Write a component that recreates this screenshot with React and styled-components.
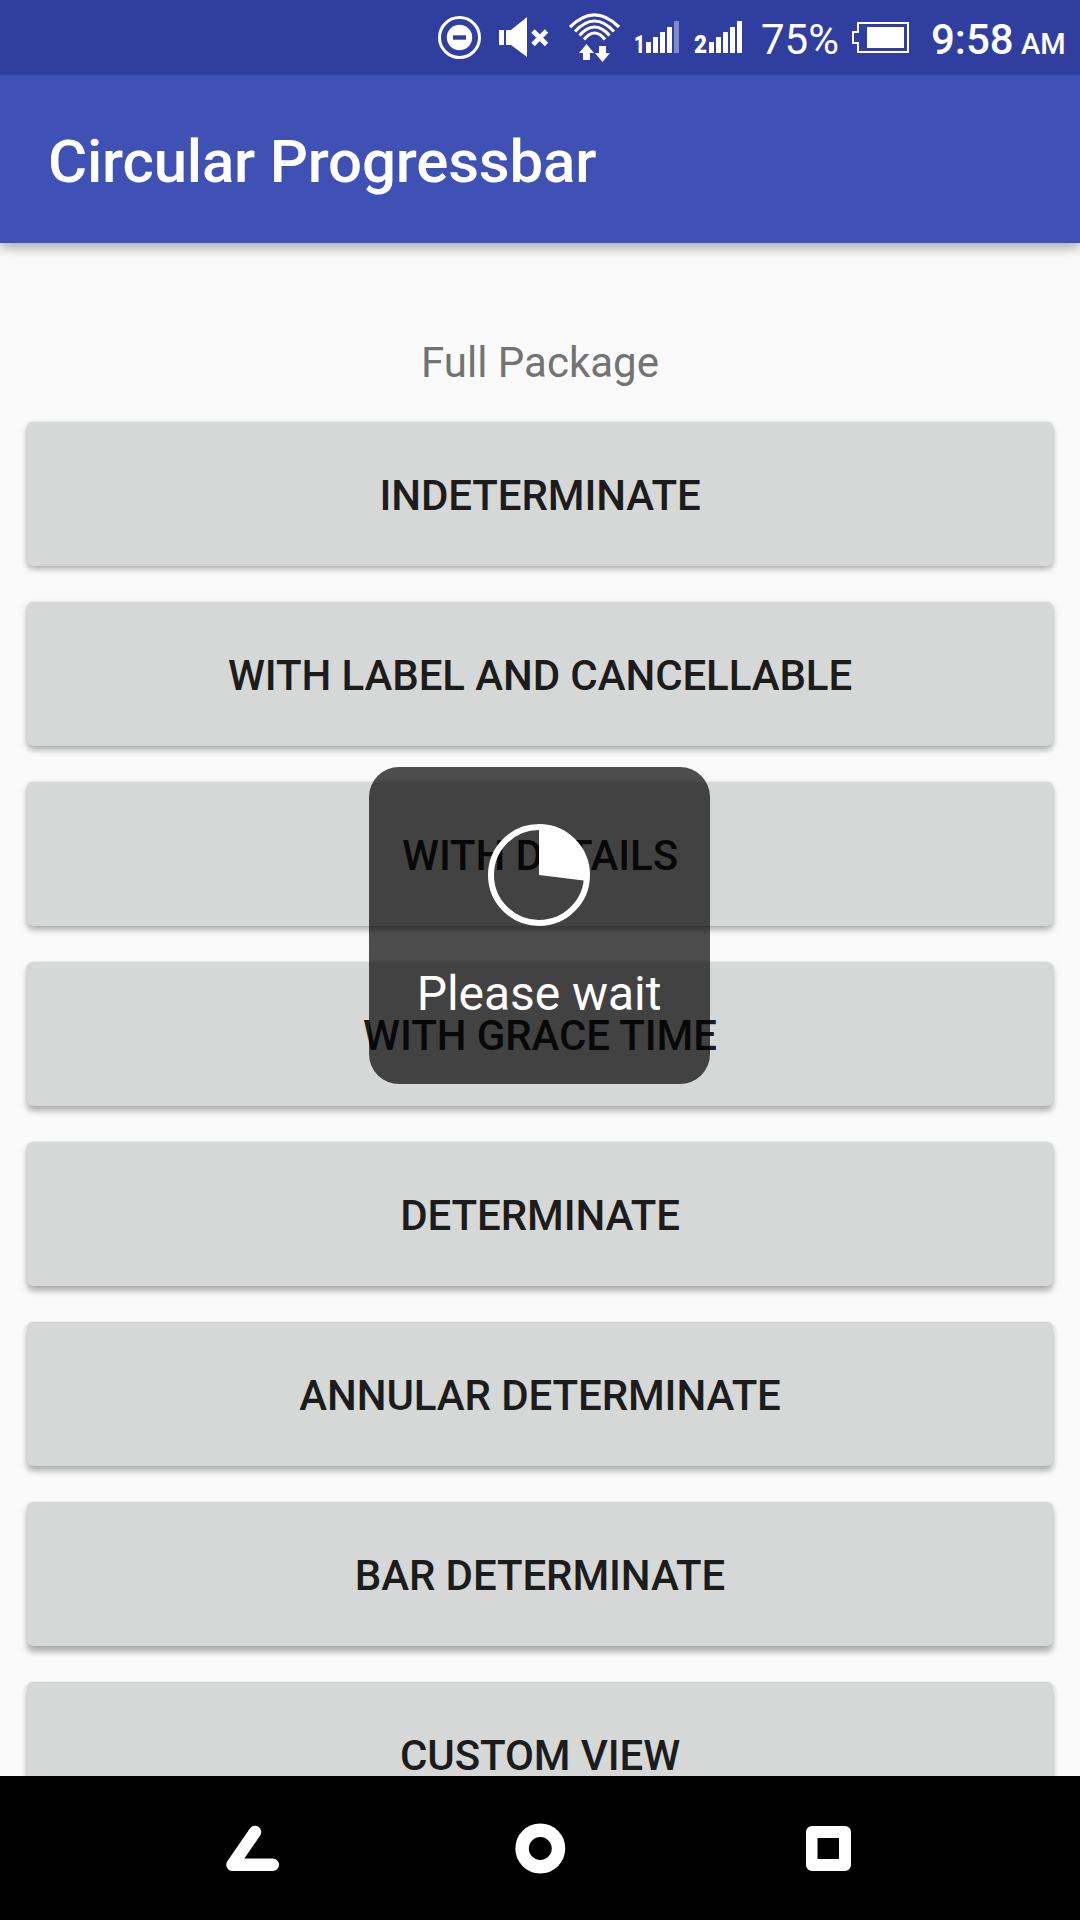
import React from 'react';
import styled, { createGlobalStyle } from 'styled-components';

const Global = createGlobalStyle`
  * { box-sizing: border-box; }
  body { margin: 0; background: #fafafa; font-family: Roboto, sans-serif; }
`;

const Screen = styled.div`
  position: relative;
  width: 1080px;
  height: 1920px;
  display: flex;
  flex-direction: column;
  overflow: hidden;
  background: #fafafa;
`;

const StatusBar = styled.header`
  position: relative;
  z-index: 2;
  height: 75px;
  flex: none;
  display: grid;
  grid-template-columns: 60px 70px 68px 63px 64px 89px 81px 90px 59px;
  padding-left: 436px;
  background: #303f9f;
  color: #fff;
`;

const Icon = styled.svg`
  display: block;
  width: ${(p) => p.$w}px;
  height: ${(p) => p.$h || 75}px;
  fill: #fff;
  overflow: visible;
`;

const StatusText = styled.span`
  padding-top: ${(p) => p.$top}px;
  font-size: ${(p) => p.$size}px;
  font-weight: ${(p) => p.$weight};
  line-height: 50px;
  height: 75px;
  white-space: nowrap;
`;

const AppBar = styled.div`
  position: relative;
  z-index: 1;
  height: 168px;
  flex: none;
  display: flex;
  align-items: center;
  padding: 5px 48px 0;
  background: #3f51b5;
  box-shadow: 0 4px 12px rgba(0, 0, 0, 0.36);
`;

const Title = styled.h1`
  margin: 0;
  color: #fff;
  font-size: 60px;
  line-height: 70px;
  font-weight: 500;
  letter-spacing: -0.2px;
`;

const Content = styled.main`
  flex: 1;
  min-height: 0;
  overflow: hidden;
  display: flex;
  flex-direction: column;
  gap: 36px;
  padding: 95px 27px 0;
`;

const SectionLabel = styled.div`
  flex: none;
  height: 48px;
  line-height: 50px;
  font-size: 42px;
  text-align: center;
  color: #737373;
`;

const ActionButton = styled.button`
  flex: none;
  height: 144px;
  padding: 3px 0 0;
  border: 0;
  border-radius: 6px;
  background: #d6d8d7;
  color: #1c1c1c;
  font: 500 42px/50px Roboto, sans-serif;
  letter-spacing: -0.1px;
  box-shadow: 0 ${(p) => 3 + p.$depth * 0.4}px 6px rgba(0, 0, 0, 0.3), 0 0 2px rgba(0, 0, 0, 0.12);
`;

const Hud = styled.div`
  position: absolute;
  left: 369px;
  top: 767px;
  width: 341px;
  height: 317px;
  display: flex;
  flex-direction: column;
  align-items: center;
  padding: 57px 1px 0 0;
  border-radius: 30px;
  background: rgba(0, 0, 0, 0.695);
`;

const HudLabel = styled.div`
  margin-top: 40px;
  font-size: 48px;
  line-height: 56px;
  letter-spacing: -0.05px;
  color: #fff;
`;

const NavBar = styled.nav`
  height: 144px;
  flex: none;
  display: grid;
  grid-template-columns: 289px 291px 46px;
  padding-left: 226px;
  background: #000;
`;

const actions = [
  'INDETERMINATE',
  'WITH LABEL AND CANCELLABLE',
  'WITH DETAILS',
  'WITH GRACE TIME',
  'DETERMINATE',
  'ANNULAR DETERMINATE',
  'BAR DETERMINATE',
  'CUSTOM VIEW',
];

const Signal = ({ sim, dimLast }) => (
  <Icon $w={50} viewBox="0 0 50 75">
    <text
      x={sim === '1' ? 0 : -3}
      y="53"
      fontSize="26.5"
      fontWeight="900"
      fontFamily="Roboto, sans-serif"
      textLength={sim === '1' ? 11 : 13}
      lengthAdjust="spacingAndGlyphs"
    >
      {sim}
    </text>
    {[11, 16, 21, 26, 32].map((h, i) => (
      <rect key={h} x={12 + i * 7} y={53 - h} width="5" height={h} opacity={dimLast && i === 4 ? 0.4 : 1} />
    ))}
  </Icon>
);

const angle = (97 * Math.PI) / 180;
const pieX = 51 + 47 * Math.sin(angle);
const pieY = 51 - 47 * Math.cos(angle);

export default function App() {
  return (
    <Screen>
      <Global />
      <StatusBar>
        <Icon $w={48} viewBox="436 0 48 75">
          <circle cx="459.5" cy="37.5" r="20" fill="none" stroke="#fff" strokeWidth="3" />
          <circle cx="459.5" cy="37.5" r="12.7" />
          <rect x="453" y="35.3" width="13" height="4.4" fill="#303f9f" />
        </Icon>
        <Icon $w={54} viewBox="496 0 54 75">
          <path d="M499 30h5v15h-5zM506 30h5l16-13v40l-16-12h-5z" />
          <path d="M533 31l13.5 13.5M546.5 31l-13.5 13.5" stroke="#fff" strokeWidth="4.8" />
        </Icon>
        <Icon $w={56} viewBox="566 0 56 75">
          <g fill="none" stroke="#fff" strokeWidth="3.2">
            <path d="M570 27Q594.500 2.500 619 27" />
            <path d="M575 31.500Q594.500 10.500 614 31.500" />
            <path d="M579.500 35.500Q594.500 18.500 609.500 35.500" />
            <path d="M584 39.500Q594.500 26.500 605 39.500" />
          </g>
          <path d="M586.500 44l7.500 9h-4v7h-7v-7h-4zM599 46h7v7h4l-7.500 9l-7.500-9h4z" />
        </Icon>
        <Signal sim="1" dimLast />
        <Signal sim="2" />
        <StatusText $size={42} $weight={400} $top={15}>75%</StatusText>
        <Icon $w={60} viewBox="850 0 60 75">
          <path d="M858 23h50v29h-50v-9h-5v-11h5z" fill="none" stroke="#fff" strokeWidth="2" />
          <rect x="867" y="27" width="37" height="21" />
        </Icon>
        <StatusText $size={42} $weight={500} $top={15}>9:58</StatusText>
        <StatusText $size={29} $weight={500} $top={19}>AM</StatusText>
      </StatusBar>
      <AppBar>
        <Title>Circular Progressbar</Title>
      </AppBar>
      <Content>
        <SectionLabel>Full Package</SectionLabel>
        {actions.map((label, i) => (
          <ActionButton key={label} $depth={i}>{label}</ActionButton>
        ))}
      </Content>
      <NavBar>
        <Icon $w={54} $h={144} viewBox="226 1776 54 144">
          <path d="M255 1832L232.500 1864.800H272.800" fill="none" stroke="#fff" strokeWidth="12.500" strokeLinecap="round" strokeLinejoin="round" />
        </Icon>
        <Icon $w={50} $h={144} viewBox="515 1776 50 144">
          <circle cx="540.300" cy="1848.500" r="18.200" fill="none" stroke="#fff" strokeWidth="13.500" />
        </Icon>
        <Icon $w={46} $h={144} viewBox="806 1776 46 144">
          <path fillRule="evenodd" d="M812 1826h33a6 6 0 0 1 6 6v33a6 6 0 0 1-6 6h-33a6 6 0 0 1-6-6v-33a6 6 0 0 1 6-6zM817.500 1838v21h21.500v-21z" />
        </Icon>
      </NavBar>
      <Hud>
        <Icon $w={102} $h={102} viewBox="0 0 102 102">
          <circle cx="51" cy="51" r="48" fill="none" stroke="#fff" strokeWidth="6" />
          <path d={`M51 51V4A47 47 0 0 1 ${pieX} ${pieY}Z`} />
        </Icon>
        <HudLabel>Please wait</HudLabel>
      </Hud>
    </Screen>
  );
}
